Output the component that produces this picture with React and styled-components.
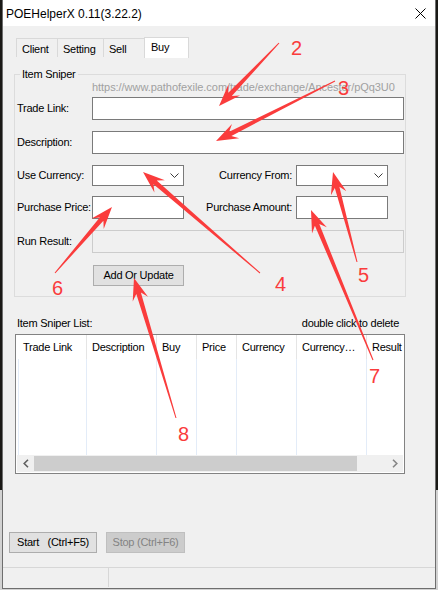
import React from 'react';
import styled, { createGlobalStyle } from 'styled-components';

const GlobalStyle = createGlobalStyle`
  html, body { margin: 0; padding: 0; }
  body {
    width: 438px;
    height: 590px;
    overflow: hidden;
    background: linear-gradient(to bottom, #1a1916 0, #1a1916 490px, #d2d2d2 490px);
    font-family: "Liberation Sans", Arial, sans-serif;
  }
`;

const Stage = styled.div`
  position: relative;
  width: 438px;
  height: 590px;
`;

const Window = styled.div`
  margin-left: 2px;
  width: 432px;
  height: 588px;
  border: 1px solid #6e6e6e;
  border-top: none;
  background: #f0f0f0;
  display: flex;
  flex-direction: column;
  font-size: 11px;
  letter-spacing: -0.25px;
  color: #000;
`;

const TitleBar = styled.div`
  height: 26px;
  flex-shrink: 0;
  background: #fff;
  display: flex;
  align-items: center;
  justify-content: space-between;
  padding-left: 3px;
`;

const Title = styled.span`
  font-size: 12px;
  letter-spacing: 0;
  line-height: 14px;
  margin-top: 1px;
`;

const CloseIcon = styled.svg`
  margin-right: 9px;
  display: block;
`;

const Main = styled.div`
  padding: 11px 0 0 11px;
  display: flex;
  flex-direction: column;
`;

const TabStrip = styled.div`
  display: flex;
  align-items: flex-start;
  height: 21px;
  padding-left: 2px;
`;

const Tab = styled.div`
  box-sizing: border-box;
  width: ${p => p.$w}px;
  height: ${p => (p.$active ? 21 : 19)}px;
  margin-top: ${p => (p.$active ? 0 : 1)}px;
  border: 1px solid #d9d9d9;
  border-bottom: none;
  border-right: ${p => (p.$active ? '1px solid #d9d9d9' : 'none')};
  background: ${p => (p.$active ? '#fff' : '#f0f0f0')};
  padding: ${p => (p.$active ? '2px 0 0 6px' : '3px 0 0 5px')};
  line-height: 14px;
  white-space: nowrap;
`;

const GroupBox = styled.fieldset`
  margin: 10px 0 0 0;
  padding: 0 1px 10px 2px;
  width: 387px;
  min-width: 0;
  border: 1px solid #dcdcdc;
`;

const Legend = styled.legend`
  margin-left: 3px;
  padding: 0 2px;
  line-height: 13px;
  font-size: 11px;
`;

const FormGrid = styled.div`
  display: grid;
  grid-template-columns: 75px 92px 112px 92px 16px;
  grid-template-rows: 16px 34px 34px 31px 34px 35px 21px;
  align-items: start;
`;

const Hint = styled.div`
  grid-column: 2 / 6;
  color: #a0a0a0;
  line-height: 12px;
  white-space: nowrap;
  overflow: hidden;
  letter-spacing: -0.05px;
`;

const Label = styled.div`
  grid-column: ${p => p.$col || 1};
  line-height: ${p => p.$h || 23}px;
  white-space: nowrap;
  text-align: ${p => (p.$right ? 'right' : 'left')};
  padding-right: ${p => (p.$right ? 4 : 0)}px;
`;

const TextBox = styled.input`
  grid-column: ${p => p.$span || '2 / 6'};
  box-sizing: border-box;
  height: 23px;
  width: 100%;
  margin: 0;
  padding: 0 3px;
  border: 1px solid ${p => (p.disabled ? '#cccccc' : '#7a7a7a')};
  background: ${p => (p.disabled ? '#f0f0f0' : '#fff')};
  outline: none;
  font: inherit;
`;

const Combo = styled.div`
  grid-column: ${p => p.$col};
  box-sizing: border-box;
  height: 21px;
  border: 1px solid #7a7a7a;
  background: #fff;
  display: flex;
  align-items: center;
  justify-content: flex-end;
  padding-right: 4px;
`;

const WinButton = styled.button`
  box-sizing: border-box;
  height: 21px;
  width: ${p => p.$w}px;
  margin: 0;
  padding: 0;
  border: 1px solid ${p => (p.disabled ? '#bfbfbf' : '#adadad')};
  background: ${p => (p.disabled ? '#cccccc' : '#e1e1e1')};
  color: ${p => (p.disabled ? '#838383' : '#000')};
  font-family: inherit;
  font-size: 11px;
  letter-spacing: -0.25px;
  white-space: pre;
  line-height: 19px;
`;

const GridButton = styled(WinButton)`
  grid-column: 2 / 4;
  margin-left: 1px;
`;

const ListSection = styled.div`
  margin: 20px 0 0 1px;
  width: 390px;
`;

const ListLabelRow = styled.div`
  display: flex;
  justify-content: space-between;
  padding: 0 6px 0 2px;
  line-height: 13px;
`;

const ListBox = styled.div`
  box-sizing: border-box;
  margin-top: 4px;
  height: 140px;
  border: 1px solid #828282;
  background: #fff;
  display: flex;
  flex-direction: column;
  overflow: hidden;
`;

const HeaderRow = styled.div`
  display: flex;
  height: 24px;
  flex-shrink: 0;
`;

const HeaderCell = styled.div`
  box-sizing: border-box;
  flex-shrink: 0;
  width: ${p => p.$w}px;
  border-right: 1px solid #e5e5e5;
  padding-left: 5px;
  line-height: 24px;
  white-space: nowrap;
  overflow: hidden;
  &:first-child { padding-left: 7px; }
`;

const BodyRow = styled.div`
  flex: 1;
  display: flex;
`;

const GridCol = styled.div`
  box-sizing: border-box;
  flex-shrink: 0;
  width: ${p => p.$w}px;
  border-right: 1px solid #e3ecf8;
`;

const HScroll = styled.div`
  height: 17px;
  flex-shrink: 0;
  margin: 0 0 1px 1px;
  width: 386px;
  display: flex;
  background: #f0f0f0;
`;

const ScrollBtn = styled.div`
  width: 17px;
  height: 17px;
  display: flex;
  align-items: center;
  justify-content: center;
  flex-shrink: 0;
`;

const Thumb = styled.div`
  width: 323px;
  height: 15px;
  margin-top: 1px;
  background: #cdcdcd;
  flex-shrink: 0;
`;

const Track = styled.div`
  flex: 1;
`;

const FooterButtons = styled.div`
  margin-top: auto;
  margin-bottom: 14px;
  padding-left: 6px;
  display: flex;
  gap: 9px;
`;

const StatusBar = styled.div`
  height: 20px;
  border-top: 1px solid #d7d7d7;
  display: flex;
  flex-shrink: 0;
`;

const StatusPanel = styled.div`
  width: 105px;
  height: 19px;
  border-right: 1px solid #d7d7d7;
`;

const Overlay = styled.svg`
  position: absolute;
  top: 0;
  left: 0;
  pointer-events: none;
`;

const Num = styled.text`
  font-family: "Liberation Sans", Arial, sans-serif;
  font-size: 20px;
  fill: #fa3c3c;
`;

function arrowPoints(x1, y1, x2, y2) {
  const dx = x2 - x1, dy = y2 - y1;
  const L = Math.hypot(dx, dy);
  const ux = dx / L, uy = dy / L;
  const nx = -uy, ny = ux;
  const hl = 22, hw = 8, notch = 6, sw = 2.4, tw = 0.5;
  const bx = x2 - ux * hl, by = y2 - uy * hl;
  const kx = x2 - ux * (hl - notch), ky = y2 - uy * (hl - notch);
  const pts = [
    [x1 + nx * tw, y1 + ny * tw],
    [kx + nx * sw, ky + ny * sw],
    [bx + nx * hw, by + ny * hw],
    [x2, y2],
    [bx - nx * hw, by - ny * hw],
    [kx - nx * sw, ky - ny * sw],
    [x1 - nx * tw, y1 - ny * tw],
  ];
  return pts.map(p => p[0].toFixed(1) + ',' + p[1].toFixed(1)).join(' ');
}

const arrows = [
  { t: [279, 43], h: [219, 106], n: '2', nx: 291, ny: 55 },
  { t: [335, 81], h: [216, 141], n: '3', nx: 338, ny: 95 },
  { t: [260, 273], h: [143, 172], n: '4', nx: 275, ny: 291 },
  { t: [357, 262], h: [333, 172], n: '5', nx: 358, ny: 282 },
  { t: [55, 273], h: [112, 207], n: '6', nx: 52, ny: 295 },
  { t: [373, 360], h: [311, 210], n: '7', nx: 369, ny: 383 },
  { t: [176, 418], h: [134, 278], n: '8', nx: 178, ny: 441 },
];

const columns = [
  ['Trade Link', 71],
  ['Description', 70],
  ['Buy', 40],
  ['Price', 40],
  ['Currency', 60],
  ['Currency…', 70],
  ['Result', 60],
];

const gridCols = [3, 68, 70, 40, 40, 60, 70, 60];

const Chevron = () => (
  <svg width="9" height="5" viewBox="0 0 9 5">
    <polyline points="0.5,0.5 4.5,4.5 8.5,0.5" fill="none" stroke="#3c3c3c" strokeWidth="1" />
  </svg>
);

export default function App() {
  return (
    <Stage>
      <GlobalStyle />
      <Window>
        <TitleBar>
          <Title>POEHelperX 0.11(3.22.2)</Title>
          <CloseIcon width="11" height="11" viewBox="0 0 11 11">
            <path d="M0.5 0.5 L10.5 10.5 M10.5 0.5 L0.5 10.5" stroke="#000" strokeWidth="1" fill="none" />
          </CloseIcon>
        </TitleBar>
        <Main>
          <TabStrip>
            <Tab $w={41}>Client</Tab>
            <Tab $w={46}>Setting</Tab>
            <Tab $w={41}>Sell</Tab>
            <Tab $w={45} $active>Buy</Tab>
          </TabStrip>
          <GroupBox>
            <Legend>Item Sniper</Legend>
            <FormGrid>
              <Hint>https://www.pathofexile.com/trade/exchange/Ancestor/pQq3U0</Hint>
              <Label>Trade Link:</Label>
              <TextBox readOnly />
              <Label>Description:</Label>
              <TextBox readOnly />
              <Label $h={21}>Use Currency:</Label>
              <Combo $col={2}><Chevron /></Combo>
              <Label $h={21} $col={3} $right>Currency From:</Label>
              <Combo $col={4}><Chevron /></Combo>
              <Label>Purchase Price:</Label>
              <TextBox readOnly $span="2" />
              <Label $col={3} $right>Purchase Amount:</Label>
              <TextBox readOnly $span="4" />
              <Label>Run Result:</Label>
              <TextBox disabled />
              <GridButton $w={91}>Add Or Update</GridButton>
            </FormGrid>
          </GroupBox>
          <ListSection>
            <ListLabelRow>
              <span>Item Sniper List:</span>
              <span>double click to delete</span>
            </ListLabelRow>
            <ListBox>
              <HeaderRow>
                {columns.map(([name, w]) => (
                  <HeaderCell key={name} $w={w}>{name}</HeaderCell>
                ))}
              </HeaderRow>
              <BodyRow>
                {gridCols.map((w, i) => (
                  <GridCol key={i} $w={w} />
                ))}
              </BodyRow>
              <HScroll>
                <ScrollBtn>
                  <svg width="6" height="9" viewBox="0 0 6 9">
                    <polyline points="5,0.8 1.2,4.5 5,8.2" fill="none" stroke="#606060" strokeWidth="1.6" />
                  </svg>
                </ScrollBtn>
                <Thumb />
                <Track />
                <ScrollBtn>
                  <svg width="6" height="9" viewBox="0 0 6 9">
                    <polyline points="1,0.8 4.8,4.5 1,8.2" fill="none" stroke="#868686" strokeWidth="1.6" />
                  </svg>
                </ScrollBtn>
              </HScroll>
            </ListBox>
          </ListSection>
        </Main>
        <FooterButtons>
          <WinButton $w={88}>{'Start   (Ctrl+F5)'}</WinButton>
          <WinButton $w={79} disabled>Stop (Ctrl+F6)</WinButton>
        </FooterButtons>
        <StatusBar>
          <StatusPanel />
        </StatusBar>
      </Window>
      <Overlay width="438" height="590" viewBox="0 0 438 590">
        {arrows.map(a => (
          <g key={a.n}>
            <polygon points={arrowPoints(a.t[0], a.t[1], a.h[0], a.h[1])} fill="#fa3c3c" />
            <Num x={a.nx} y={a.ny}>{a.n}</Num>
          </g>
        ))}
      </Overlay>
    </Stage>
  );
}
